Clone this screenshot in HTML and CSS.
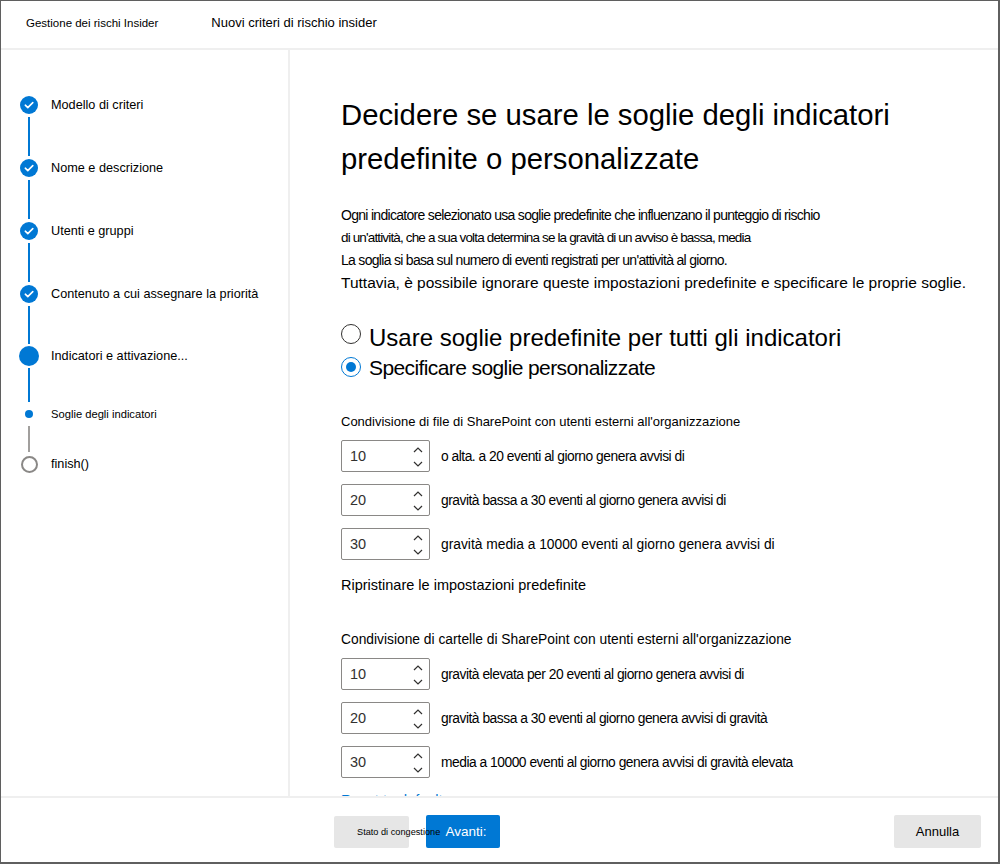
FILE: index.html
```html
<!DOCTYPE html>
<html lang="it">
<head>
<meta charset="utf-8">
<title>Nuovi criteri di rischio insider</title>
<link rel="stylesheet" href="styles.css">
</head>
<body>
<div class="window">
  <header class="topbar">
    <span class="crumb">Gestione dei rischi Insider</span>
    <span class="pagetitle">Nuovi criteri di rischio insider</span>
  </header>
  <div class="body">
    <nav class="steps">
      <div class="step"><span class="ico ico-done"><svg viewBox="0 0 18 18" width="18" height="18"><circle cx="9" cy="9" r="9" fill="#0078d4"/><path d="M5.3 9.2 L7.8 11.6 L12.8 6.6" fill="none" stroke="#fff" stroke-width="1.6" stroke-linecap="round" stroke-linejoin="round"/></svg></span><span class="lbl">Modello di criteri</span></div>
      <div class="conn"></div>
      <div class="step"><span class="ico ico-done"><svg viewBox="0 0 18 18" width="18" height="18"><circle cx="9" cy="9" r="9" fill="#0078d4"/><path d="M5.3 9.2 L7.8 11.6 L12.8 6.6" fill="none" stroke="#fff" stroke-width="1.6" stroke-linecap="round" stroke-linejoin="round"/></svg></span><span class="lbl">Nome e descrizione</span></div>
      <div class="conn"></div>
      <div class="step"><span class="ico ico-done"><svg viewBox="0 0 18 18" width="18" height="18"><circle cx="9" cy="9" r="9" fill="#0078d4"/><path d="M5.3 9.2 L7.8 11.6 L12.8 6.6" fill="none" stroke="#fff" stroke-width="1.6" stroke-linecap="round" stroke-linejoin="round"/></svg></span><span class="lbl">Utenti e gruppi</span></div>
      <div class="conn"></div>
      <div class="step"><span class="ico ico-done"><svg viewBox="0 0 18 18" width="18" height="18"><circle cx="9" cy="9" r="9" fill="#0078d4"/><path d="M5.3 9.2 L7.8 11.6 L12.8 6.6" fill="none" stroke="#fff" stroke-width="1.6" stroke-linecap="round" stroke-linejoin="round"/></svg></span><span class="lbl">Contenuto a cui assegnare la priorità</span></div>
      <div class="conn conn-b"></div>
      <div class="step"><span class="ico"><span class="dot-big"></span></span><span class="lbl">Indicatori e attivazione...</span></div>
      <div class="conn conn-c"></div>
      <div class="step"><span class="ico"><span class="dot-small"></span></span><span class="lbl lbl-sub">Soglie degli indicatori</span></div>
      <div class="conn conn-d"></div>
      <div class="step"><span class="ico"><span class="dot-empty"></span></span><span class="lbl">finish()</span></div>
    </nav>
    <main class="content">
      <h1 class="heading">Decidere se usare le soglie degli indicatori predefinite o personalizzate</h1>
      <p class="intro">
        <span class="line line-a">Ogni indicatore selezionato usa soglie predefinite che influenzano il punteggio di rischio</span>
        <span class="line line-b">di un'attività, che a sua volta determina se la gravità di un avviso è bassa, media</span>
        <span class="line line-a">La soglia si basa sul numero di eventi registrati per un'attività al giorno.</span>
        <span class="line line-c">Tuttavia, è possibile ignorare queste impostazioni predefinite e specificare le proprie soglie.</span>
      </p>
      <div class="radios">
        <div class="radio"><span class="circle"></span><span class="rlabel">Usare soglie predefinite per tutti gli indicatori</span></div>
        <div class="radio"><span class="circle checked"></span><span class="rlabel rlabel-sm">Specificare soglie personalizzate</span></div>
      </div>

      <div class="section">
        <div class="sec-label">Condivisione di file di SharePoint con utenti esterni all'organizzazione</div>
        <div class="spin-row"><div class="spin"><span class="val">10</span><span class="arrows"><svg width="10" height="6" viewBox="0 0 10 6"><path d="M1 5 L5 1 L9 5" fill="none" stroke="#323130" stroke-width="1.2"/></svg><svg width="10" height="6" viewBox="0 0 10 6"><path d="M1 1 L5 5 L9 1" fill="none" stroke="#323130" stroke-width="1.2"/></svg></span></div><span class="spin-label tight">o alta. a 20 eventi al giorno genera avvisi di</span></div>
        <div class="spin-row"><div class="spin"><span class="val">20</span><span class="arrows"><svg width="10" height="6" viewBox="0 0 10 6"><path d="M1 5 L5 1 L9 5" fill="none" stroke="#323130" stroke-width="1.2"/></svg><svg width="10" height="6" viewBox="0 0 10 6"><path d="M1 1 L5 5 L9 1" fill="none" stroke="#323130" stroke-width="1.2"/></svg></span></div><span class="spin-label tight">gravità bassa a 30 eventi al giorno genera avvisi di</span></div>
        <div class="spin-row"><div class="spin"><span class="val">30</span><span class="arrows"><svg width="10" height="6" viewBox="0 0 10 6"><path d="M1 5 L5 1 L9 5" fill="none" stroke="#323130" stroke-width="1.2"/></svg><svg width="10" height="6" viewBox="0 0 10 6"><path d="M1 1 L5 5 L9 1" fill="none" stroke="#323130" stroke-width="1.2"/></svg></span></div><span class="spin-label">gravità media a 10000 eventi al giorno genera avvisi di</span></div>
        <div class="reset">Ripristinare le impostazioni predefinite</div>
      </div>

      <div class="section section-2">
        <div class="sec-label sec-label-lg">Condivisione di cartelle di SharePoint con utenti esterni all'organizzazione</div>
        <div class="spin-row"><div class="spin"><span class="val">10</span><span class="arrows"><svg width="10" height="6" viewBox="0 0 10 6"><path d="M1 5 L5 1 L9 5" fill="none" stroke="#323130" stroke-width="1.2"/></svg><svg width="10" height="6" viewBox="0 0 10 6"><path d="M1 1 L5 5 L9 1" fill="none" stroke="#323130" stroke-width="1.2"/></svg></span></div><span class="spin-label tight">gravità elevata per 20 eventi al giorno genera avvisi di</span></div>
        <div class="spin-row"><div class="spin"><span class="val">20</span><span class="arrows"><svg width="10" height="6" viewBox="0 0 10 6"><path d="M1 5 L5 1 L9 5" fill="none" stroke="#323130" stroke-width="1.2"/></svg><svg width="10" height="6" viewBox="0 0 10 6"><path d="M1 1 L5 5 L9 1" fill="none" stroke="#323130" stroke-width="1.2"/></svg></span></div><span class="spin-label tight">gravità bassa a 30 eventi al giorno genera avvisi di gravità</span></div>
        <div class="spin-row"><div class="spin"><span class="val">30</span><span class="arrows"><svg width="10" height="6" viewBox="0 0 10 6"><path d="M1 5 L5 1 L9 5" fill="none" stroke="#323130" stroke-width="1.2"/></svg><svg width="10" height="6" viewBox="0 0 10 6"><path d="M1 1 L5 5 L9 1" fill="none" stroke="#323130" stroke-width="1.2"/></svg></span></div><span class="spin-label tight">media a 10000 eventi al giorno genera avvisi di gravità elevata</span></div>
        <div class="reset link">Reset to default</div>
      </div>
    </main>
  </div>
  <footer class="footer">
    <button class="btn btn-back">Stato di congestione</button>
    <button class="btn btn-primary">Avanti:</button>
    <button class="btn btn-cancel">Annulla</button>
  </footer>
</div>
</body>
</html>
```

FILE: styles.css
```css
* { box-sizing: border-box; }
html, body { margin: 0; padding: 0; background: #fff; }
body { font-family: "Liberation Sans", Arial, sans-serif; color: #000; }

.window {
  width: 1000px;
  height: 864px;
  border-top: 1px solid #5f5f5f;
  border-left: 1px solid #5f5f5f;
  border-right: 2px solid #5f5f5f;
  border-bottom: 2px solid #5f5f5f;
  display: flex;
  flex-direction: column;
  overflow: hidden;
}

.topbar {
  height: 49px;
  flex: none;
  border-bottom: 2px solid #efefef;
  display: flex;
  align-items: baseline;
  padding: 12px 0 0 25px;
  gap: 53px;
  line-height: 20px;
}
.crumb { font-size: 11.5px; }
.pagetitle { font-size: 13px; }

.body {
  flex: 1;
  display: flex;
  min-height: 0;
}

.steps {
  width: 289px;
  flex: none;
  border-right: 2px solid #efefef;
  padding-top: 45px;
  display: flex;
  flex-direction: column;
}
.step {
  height: 20px;
  display: flex;
  align-items: center;
}
.ico {
  width: 20px;
  height: 20px;
  margin-left: 18px;
  margin-right: 12px;
  display: flex;
  align-items: center;
  justify-content: center;
  flex: none;
}
.ico svg { display: block; }
.lbl { font-size: 12.7px; white-space: nowrap; }
.lbl-sub { font-size: 11.2px; }
.dot-big { width: 20px; height: 20px; border-radius: 50%; background: #0078d4; }
.dot-small { width: 8px; height: 8px; border-radius: 50%; background: #0078d4; }
.dot-empty { width: 17px; height: 17px; border-radius: 50%; border: 2px solid #8a8886; }

.conn {
  width: 2px;
  height: 39px;
  margin: 2px 0 2px 27px;
  background: #0078d4;
}
.conn-b { height: 38px; }
.conn-c { height: 34px; }
.conn-d { height: 26px; background: #a19f9d; }

.content {
  flex: 1;
  min-width: 0;
  overflow: hidden;
  padding: 43px 20px 0 51px;
}

.heading {
  margin: 0;
  font-weight: normal;
  font-size: 29.3px;
  line-height: 44px;
  width: 560px;
}

.intro {
  margin: 23px 0 0;
  font-size: 14px;
  line-height: 22.5px;
}
.intro .line { display: block; white-space: nowrap; }
.intro .line-a { letter-spacing: -0.7px; }
.intro .line-b { font-size: 13.5px; letter-spacing: -0.85px; }
.intro .line-c { font-size: 15.5px; }

.radios { margin-top: 26px; }
.radio {
  display: flex;
  align-items: flex-start;
  height: 33px;
}
.circle {
  width: 20px;
  height: 20px;
  margin-top: 4px;
  border-radius: 50%;
  border: 1px solid #323130;
  flex: none;
  display: flex;
  align-items: center;
  justify-content: center;
}
.circle.checked { border-color: #0078d4; }
.circle.checked::after {
  content: "";
  width: 10px;
  height: 10px;
  border-radius: 50%;
  background: #0078d4;
}
.rlabel {
  font-size: 24px;
  line-height: 30px;
  padding-top: 3px;
  margin-left: 8px;
  white-space: nowrap;
}
.rlabel-sm {
  font-size: 21px;
  letter-spacing: -0.6px;
  padding-top: 0;
}

.section { margin-top: 27px; }
.section-2 { margin-top: 36px; }
.sec-label {
  font-size: 13px;
  line-height: 18px;
  margin-bottom: 9px;
  white-space: nowrap;
}
.sec-label-lg { font-size: 13.8px; }
.spin-row {
  display: flex;
  align-items: center;
  height: 32px;
  margin-bottom: 12px;
}
.spin {
  width: 89px;
  height: 32px;
  border: 1px solid #8a8886;
  border-radius: 2px;
  display: flex;
  align-items: center;
  justify-content: space-between;
  padding: 0 6px 0 8px;
  flex: none;
}
.val { font-size: 14.5px; color: #323130; }
.arrows {
  display: flex;
  flex-direction: column;
  gap: 8px;
  margin-top: 1px;
}
.arrows svg { display: block; }
.spin-label {
  margin-left: 11px;
  font-size: 13.8px;
  white-space: nowrap;
}
.spin-label.tight { letter-spacing: -0.48px; }
.reset {
  font-size: 14.5px;
  line-height: 20px;
  margin-top: 15px;
  white-space: nowrap;
}
.reset.link { color: #0078d4; margin-top: 0; }

.footer {
  height: 66px;
  flex: none;
  border-top: 2px solid #efefef;
  display: flex;
  align-items: flex-start;
  padding: 17px 17px 0 333px;
}
.btn {
  font-family: "Liberation Sans", Arial, sans-serif;
  border: none;
  border-radius: 2px;
  height: 33px;
  margin: 0;
  cursor: pointer;
}
.btn-back {
  width: 75px;
  height: 32px;
  margin-top: 1px;
  background: #e6e6e6;
  font-size: 9.2px;
  color: #000;
  text-align: left;
  padding: 0 0 0 23px;
  white-space: nowrap;
  overflow: visible;
  position: relative;
  z-index: 1;
}
.btn-primary {
  width: 74px;
  margin-left: 17px;
  padding: 0 0 0 6px;
  background: #0078d4;
  color: #fff;
  font-size: 13.5px;
}
.btn-cancel {
  width: 87px;
  margin-left: auto;
  background: #e6e6e6;
  color: #000;
  font-size: 13px;
}
```
